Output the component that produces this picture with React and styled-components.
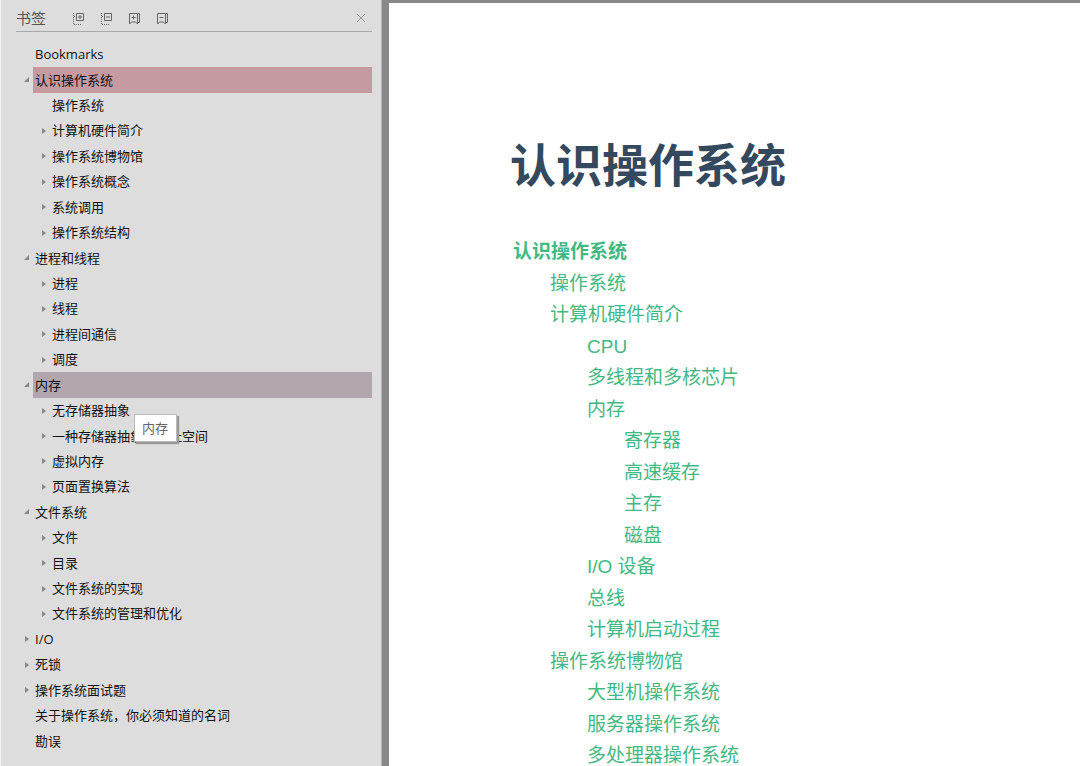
import React, { useState } from "react";
import styled, { createGlobalStyle } from "styled-components";

const GlobalStyle = createGlobalStyle`
  * {
    box-sizing: border-box;
  }
  body {
    margin: 0;
    background: #888;
  }
`;

const Layout = styled.div`
  display: flex;
  height: 100vh;
  overflow: hidden;
`;

const Sidebar = styled.aside`
  display: flex;
  flex-direction: column;
  flex: 0 0 382px;
  padding: 0 9px 12px 15px;
  border-left: 1px solid #f4f4f4;
  border-right: 1px solid #b4b4bc;
  background: #ddd;
  color: #111;
  font-family: "Open Sans", "Noto Sans CJK SC", sans-serif;
`;

const Toolbar = styled.header`
  display: flex;
  align-items: center;
  gap: 14px;
  height: 32px;
  padding-top: 5px;
  margin-bottom: 10px;
  border-bottom: 1px solid #a9a9a9;
`;

const Title = styled.h2`
  margin: 0 12px 0 0;
  color: #555;
  font-size: 15px;
  font-weight: 400;
  line-height: 20px;
`;

const IconButton = styled.button`
  display: flex;
  width: 14px;
  height: 16px;
  padding: 0;
  border: 0;
  background: none;
  color: ${(props) => (props.$faint ? "#999" : "#666")};
  margin-left: ${(props) => (props.$faint ? "auto" : "0")};
  margin-right: ${(props) => (props.$faint ? "4px" : "0")};
  cursor: pointer;
`;

const Tree = styled.ul`
  display: flex;
  flex-direction: column;
  flex: 1;
  margin: 0;
  padding: 0;
  list-style: none;
`;

const TreeRow = styled.li`
  position: relative;
  display: flex;
  flex: 1 0 25px;
  max-height: 26px;
  padding-left: ${(props) => props.$level * 17}px;
`;

const Toggle = styled.button`
  display: flex;
  align-items: center;
  justify-content: center;
  flex: 0 0 17px;
  padding: 0 0 0 4px;
  border: 0;
  background: none;
  color: #888;
`;

const Spacer = styled.span`
  flex: 0 0 17px;
`;

const BookmarkLink = styled.a`
  display: flex;
  align-items: center;
  flex: 1;
  padding: 0 0 1px 2px;
  background: ${(props) => props.$fill || "transparent"};
  color: inherit;
  font-size: 13px;
  line-height: 18px;
  text-decoration: none;
  white-space: nowrap;
`;

const Tooltip = styled.span`
  position: absolute;
  z-index: 1;
  top: 42px;
  left: 118px;
  padding: 4px 8px 4px 7px;
  border: 1px solid #bbb;
  background: #fff;
  box-shadow: 2px 2px 1px #999;
  color: #666;
  font-size: 13px;
  line-height: 18px;
`;

const Viewer = styled.main`
  flex: 1;
  min-width: 0;
  padding: 3px 0 0 7px;
  background: #888;
`;

const Sheet = styled.article`
  height: 100%;
  overflow: hidden;
  padding: 130px 24px 0 121px;
  background: #fff;
  font-family: "Liberation Sans", "Noto Sans CJK SC", sans-serif;
`;

const Heading = styled.h1`
  margin: 0 0 37px;
  color: #34495e;
  font-size: 46px;
  font-weight: 700;
  line-height: 66px;
`;

const Contents = styled.ul`
  margin: 0;
  padding: 0 0 0 3px;
  list-style: none;
`;

const ContentsItem = styled.li`
  height: 32px;
  padding-left: ${(props) => props.$level * 37}px;
  font-size: 19px;
  font-weight: ${(props) => (props.$level === 0 ? 700 : 400)};
  line-height: 31px;

  &:nth-child(even) {
    height: 31px;
  }
`;

const ContentsLink = styled.a`
  color: #42b983;
  text-decoration: none;
`;

// [level, title, state]
const bookmarks = [
  [0, "Bookmarks"],
  [0, "认识操作系统", "open"],
  [1, "操作系统"],
  [1, "计算机硬件简介", "closed"],
  [1, "操作系统博物馆", "closed"],
  [1, "操作系统概念", "closed"],
  [1, "系统调用", "closed"],
  [1, "操作系统结构", "closed"],
  [0, "进程和线程", "open"],
  [1, "进程", "closed"],
  [1, "线程", "closed"],
  [1, "进程间通信", "closed"],
  [1, "调度", "closed"],
  [0, "内存", "open"],
  [1, "无存储器抽象", "closed"],
  [1, "一种存储器抽象：地址空间", "closed"],
  [1, "虚拟内存", "closed"],
  [1, "页面置换算法", "closed"],
  [0, "文件系统", "open"],
  [1, "文件", "closed"],
  [1, "目录", "closed"],
  [1, "文件系统的实现", "closed"],
  [1, "文件系统的管理和优化", "closed"],
  [0, "I/O", "closed"],
  [0, "死锁", "closed"],
  [0, "操作系统面试题", "closed"],
  [0, "关于操作系统，你必须知道的名词"],
  [0, "勘误"],
];

const contents = [
  [0, "认识操作系统"],
  [1, "操作系统"],
  [1, "计算机硬件简介"],
  [2, "CPU"],
  [2, "多线程和多核芯片"],
  [2, "内存"],
  [3, "寄存器"],
  [3, "高速缓存"],
  [3, "主存"],
  [3, "磁盘"],
  [2, "I/O 设备"],
  [2, "总线"],
  [2, "计算机启动过程"],
  [1, "操作系统博物馆"],
  [2, "大型机操作系统"],
  [2, "服务器操作系统"],
  [2, "多处理器操作系统"],
];

function TreeIcon({ plus }) {
  return (
    <svg width="14" height="16" viewBox="0 0 14 16" fill="none" stroke="currentColor">
      <path d="M1.5 3v11M2 14.5h7M2 6.5h2" strokeDasharray="1 1" />
      <path d="M4.5 3.5h7v7h-7zM6 7h4" />
      {plus && <path d="M8 5v4" />}
    </svg>
  );
}

function BookmarkIcon({ plus }) {
  return (
    <svg width="14" height="16" viewBox="0 0 14 16" fill="none" stroke="currentColor">
      <path d="M1.5 3.5h8v10.5l-2-2h-4l-2 2zM9.5 3.5h2v9h-2M3.5 7.5h4" />
      {plus && <path d="M5.5 5.5v4" />}
    </svg>
  );
}

function Arrow({ open }) {
  return (
    <svg width="6" height="6" viewBox="0 0 6 6" fill="currentColor">
      <path d={open ? "M5 0v5H0z" : "M1 0l4 3-4 3z"} />
    </svg>
  );
}

function App() {
  const [selected, setSelected] = useState("认识操作系统");
  const hovered = "内存";

  const fillFor = (title) => {
    if (title === selected) return "#c59aa0";
    if (title === hovered) return "#b1a6ae";
    return null;
  };

  return (
    <>
      <GlobalStyle />
      <Layout>
        <Sidebar>
          <Toolbar>
            <Title>书签</Title>
            <IconButton aria-label="展开全部">
              <TreeIcon plus />
            </IconButton>
            <IconButton aria-label="折叠全部">
              <TreeIcon />
            </IconButton>
            <IconButton aria-label="添加书签">
              <BookmarkIcon plus />
            </IconButton>
            <IconButton aria-label="删除书签">
              <BookmarkIcon />
            </IconButton>
            <IconButton aria-label="关闭" $faint>
              <svg width="14" height="16" viewBox="0 0 14 16" fill="none" stroke="currentColor">
                <path d="M3 4l8 8M11 4l-8 8" />
              </svg>
            </IconButton>
          </Toolbar>
          <Tree>
            {bookmarks.map(([level, title, state]) => (
              <TreeRow key={title} $level={level}>
                {state ? (
                  <Toggle aria-label={title} aria-expanded={state === "open"}>
                    <Arrow open={state === "open"} />
                  </Toggle>
                ) : (
                  <Spacer />
                )}
                <BookmarkLink
                  href="#"
                  $fill={fillFor(title)}
                  onClick={() => setSelected(title)}
                >
                  {title}
                </BookmarkLink>
                {title === hovered && <Tooltip role="tooltip">{title}</Tooltip>}
              </TreeRow>
            ))}
          </Tree>
        </Sidebar>
        <Viewer>
          <Sheet>
            <Heading>认识操作系统</Heading>
            <Contents>
              {contents.map(([level, title]) => (
                <ContentsItem key={title} $level={level}>
                  <ContentsLink href="#">{title}</ContentsLink>
                </ContentsItem>
              ))}
            </Contents>
          </Sheet>
        </Viewer>
      </Layout>
    </>
  );
}

export default App;
